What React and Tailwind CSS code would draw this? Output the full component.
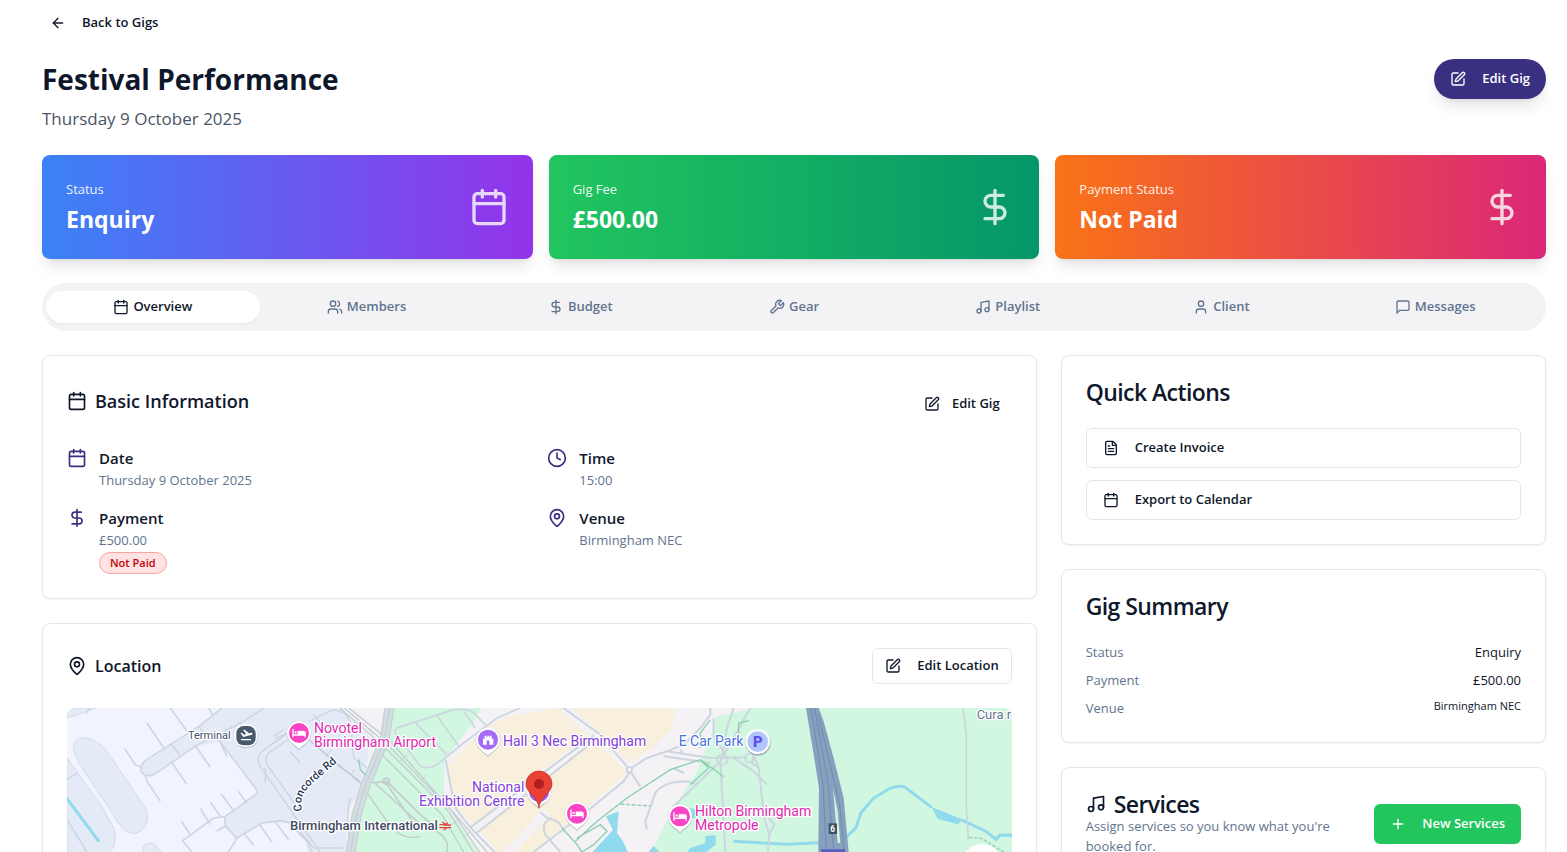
import { useState } from 'react'
import {
  ArrowLeft,
  Calendar,
  Clock,
  DollarSign,
  FileText,
  MapPin,
  Music,
  Plus,
  SquarePen,
  User,
  Users,
} from 'lucide-react'
import clsx from 'clsx'

const WrenchIcon = ({ className }) => (
  <svg className={className} viewBox="0 0 24 24" fill="none" stroke="currentColor" strokeWidth="2" strokeLinecap="round" strokeLinejoin="round" aria-hidden="true">
    <path d="M14.7 6.3a1 1 0 0 0 0 1.4l1.6 1.6a1 1 0 0 0 1.4 0l3.77-3.77a6 6 0 0 1-7.94 7.94l-6.91 6.91a2.12 2.12 0 0 1-3-3l6.91-6.91a6 6 0 0 1 7.94-7.94l-3.76 3.76z" />
  </svg>
)

const MessageIcon = ({ className }) => (
  <svg className={className} viewBox="0 0 24 24" fill="none" stroke="currentColor" strokeWidth="2" strokeLinecap="round" strokeLinejoin="round" aria-hidden="true">
    <path d="M21 15a2 2 0 0 1-2 2H7l-4 4V5a2 2 0 0 1 2-2h14a2 2 0 0 1 2 2z" />
  </svg>
)

const stats = [
  { label: 'Status', value: 'Enquiry', Icon: Calendar, gradient: 'from-[#3b82f6] to-[#9333ea]' },
  { label: 'Gig Fee', value: '£500.00', Icon: DollarSign, gradient: 'from-[#22c55e] to-[#059669]' },
  { label: 'Payment Status', value: 'Not Paid', Icon: DollarSign, gradient: 'from-[#f97316] to-[#db2777]' },
]

const tabs = [
  { name: 'Overview', Icon: Calendar },
  { name: 'Members', Icon: Users },
  { name: 'Budget', Icon: DollarSign },
  { name: 'Gear', Icon: WrenchIcon },
  { name: 'Playlist', Icon: Music },
  { name: 'Client', Icon: User },
  { name: 'Messages', Icon: MessageIcon },
]

const details = [
  { label: 'Date', value: 'Thursday 9 October 2025', Icon: Calendar },
  { label: 'Time', value: '15:00', Icon: Clock },
  { label: 'Payment', value: '£500.00', Icon: DollarSign, badge: 'Not Paid' },
  { label: 'Venue', value: 'Birmingham NEC', Icon: MapPin },
]

const Card = ({ children }) => (
  <section className="rounded-lg border border-gray-200 bg-white p-6 shadow-xs">{children}</section>
)

const StatCard = ({ label, value, Icon, gradient }) => (
  <div className={clsx('flex items-center justify-between rounded-lg bg-linear-to-r/srgb p-6 text-white shadow-lg', gradient)}>
    <div className="flex flex-col gap-1">
      <p className="text-[13px] leading-5 opacity-90">{label}</p>
      <p className="text-[23px] leading-8 font-bold">{value}</p>
    </div>
    <Icon className="size-10 opacity-80" />
  </div>
)

// Teardrop pin used for hotels and venues
const PlacePin = ({ x, y, color, children }) => (
  <g transform={`translate(${x} ${y})`}>
    <path d="M0 49C-6 38-37 28-37-2a37 37 0 0 1 74 0C37 28 6 38 0 49z" fill="#9aa3ad" opacity=".6" />
    <path d="M0 45C-6 34-36 26-36-3a36 36 0 0 1 72 0C36 26 6 34 0 45z" fill="#fff" />
    <circle cy="-3" r="30" fill={color} />
    {children}
  </g>
)

const Bed = () => (
  <g fill="none" stroke="#fff" strokeWidth="4">
    <path d="M-18-15V10M-18 3H18M18 10V-6M-2-9V3" />
    <circle cx="-10" cy="-5" r="3" fill="#fff" strokeWidth="1" />
    <path d="M-2-9H14Q18-9 18-5V3H-2z" fill="#fff" strokeWidth="1" />
  </g>
)

const Castle = () => (
  <path d="M-15 12V-6h5v-9h5v4h3v-4h5v4h3v-4h5v9h5V12H4V3a4 4 0 0 0-8 0v9z" fill="#fff" />
)

const VenueMap = () => (
  <svg className="h-64 w-full rounded-lg" viewBox="0 0 2835 768" preserveAspectRatio="xMinYMin slice" role="img" aria-label="Map of Birmingham NEC">
    <rect width="2835" height="768" fill="#f4f2f4" />

    {/* Airport */}
    <path d="M0 0H820L910 90 890 230 840 310 830 768H0z" fill="#e4ebf7" />
    <path d="M0 0H465L395 55 225 170Q215 190 232 203L250 204 380 115 459 101 569 246Q572 258 560 264L474 326V352L509 391 585 345 665 343 720 400 740 768H0z" fill="#f1f4ff" />
    <path d="M0 0H88L0 30z" fill="#e4ebf7" stroke="#cfd9e6" strokeWidth="3" />
    <path d="M45 90C75 88 105 105 130 145L235 300C250 330 240 370 200 377 175 375 150 345 140 320L45 180C20 140 5 100 45 90z" fill="#e4ebf7" stroke="#cfdae8" strokeWidth="3" />
    <path d="M0 150L104 295 142 365C150 400 140 425 125 432L110 768H0z" fill="#e4ebf7" stroke="#cfdae8" strokeWidth="3" />
    <path d="M228 432C225 410 240 400 262 408L290 440 400 600 260 500z" fill="#e4ebf7" stroke="#cfdae8" strokeWidth="3" />
    <path d="M0 272L94 398" stroke="#8edbee" strokeWidth="9" strokeLinecap="round" />
    <path d="M225 170L395 55 465 0H570L480 65 385 115 262 199Q240 210 225 195z" fill="#e4ebf7" />
    <g fill="none" stroke="#ccd7e2" strokeWidth="5">
      <path d="M465 0L395 55 235 158Q215 175 225 195 240 210 262 199L385 115 480 65 530 40 590 0M395 55L420 88M312 108L338 140" />
      <path d="M240 45L290 120M310 0L360 70M425 0L438 22M173 122L205 170 222 178M312 160L358 227M384 112L430 178M235 205L240 220 280 280M459 101L480 145M440 75L569 246Q572 258 560 264L474 326M474 326L440 330 347 398 375 432M474 326V352L509 391 585 345 640 338 665 343 720 400 745 460" />
      <path d="M343 340L370 380M400 302L430 350M430 282L460 325M463 258L500 308M514 250L538 285M449 370L474 355M509 391L480 440M530 375L560 412M578 350L615 402M625 342L665 395M0 335L60 432M0 215L30 195M57 18L66 0" />
    </g>
    <g fill="none" stroke="#cbd5de" strokeWidth="4">
      <path d="M669 70L585 130Q565 150 580 175L680 320 760 432M669 90L605 135Q590 150 600 170L700 310M619 85L650 65M625 92L665 72M595 180V225M725 40L790 8Q830 0 850 40L860 150 900 180M755 120L810 170 880 220M740 20L790 80M669 130L700 165M850 270Q835 320 850 400M669 335L740 420H830" />
    </g>

    {/* Green areas */}
    <path d="M985 0H1245L1215 50 1134 152 1130 240 1145 310 1185 360 1260 470V768H840L870 400 885 306 955 90 960 0z" fill="#d1f7e0" />
    <path d="M2835 0H2060L1949 26 1929 90 1890 190 1800 336 1745 450V768H2835z" fill="#d1f7e0" />

    {/* NEC halls */}
    <path d="M1262 55L1320 25 1480 0H1828L1815 60 1760 115 1690 165 1665 205 1560 300 1450 390 1370 450 1330 470 1215 345 1160 290 1140 175 1215 100z" fill="#f8efdd" />
    <path d="M1489 0L1585 80 1690 185 1800 110 1930 20M1585 80L1215 370M1300 460L1440 310" fill="none" stroke="#f4f2f4" strokeWidth="26" />

    {/* Water */}
    <path d="M1655 310L1617 325 1638 366 1560 450H1690L1668 400 1650 375zM1744 432L1760 414 1785 440zM1915 384L1946 382V410L1900 445H1850L1870 420 1915 405zM1870 300L1885 305 1890 330H1872z" fill="#90daee" />
    <path d="M1999 400L2160 409 2255 404M2339 386L2367 359 2381 316 2419 271 2469 241Q2500 230 2514 238L2594 298M2680 334L2759 371 2787 394 2799 381 2835 382" fill="none" stroke="#90daee" strokeWidth="9" />
    <path d="M2594 298L2630 311 2684 334 2674 349 2612 333zM2312 320L2322 330 2320 410 2310 390z" fill="#90daee" />

    {/* Railway */}
    <g fill="none" stroke="#c3cccf" strokeWidth="4">
      <path d="M819 0L950 115 1145 310 1230 450M832 0L960 108 1155 310 1250 450M845 0L970 100 1165 320 1275 450M930 125L1125 320 1200 450M719 90L880 225 960 340Q1000 400 1060 385" />
      <path d="M900 60L920 78M1000 160L1020 140M1060 220L1078 200M1110 275L1130 255M1155 350L1180 330M1190 390L1210 370M780 140L795 125M850 200L865 185" strokeWidth="3" />
      <path d="M885 300V250Q890 225 920 222L1050 340 1100 365Q1150 390 1140 432M960 220L1060 320 1090 345M955 222L1040 345M960 220L920 224" strokeWidth="5" />
      <circle cx="958" cy="220" r="9" strokeWidth="5" />
    </g>

    {/* Roads */}
    <path d="M968 -5L954 90 894 236 869 320 848 450" fill="none" stroke="#c3ced4" strokeWidth="30" />
    <path d="M968 -5L954 90 894 236 869 320 848 450" fill="none" stroke="#d3dce0" strokeWidth="24" />
    <path d="M968 -5L954 90 894 236 869 320 848 450" fill="none" stroke="#c3ced4" strokeWidth="3" />
    <g fill="none" stroke="#ccd5e0" strokeWidth="7">
      <path d="M985 75Q980 65 995 58L1160 5Q1215 0 1225 20L1255 50M985 75L1060 175Q1085 185 1110 170L1190 105 1290 30 1359 0M1045 45L1140 140M1108 20L1175 115M1190 10L1225 60" strokeWidth="5" />
      <path d="M1136 155L1150 230 1165 300 1210 358 1300 450M1210 358L1580 82M1225 378L1595 88M1489 0L1600 80 1685 182" strokeWidth="6" />
      <path d="M1690 182L1740 150 1800 130 1930 150 2040 148M1800 130L1850 110 1900 60 1930 20V0M1790 145L1930 165M1840 125L1850 140M1690 190L1670 220 1560 310 1400 432M1690 190L1720 235M1420 312L1440 330Q1480 335 1490 370M1435 380Q1420 340 1455 332M1435 380L1480 432" strokeWidth="6" />
      <path d="M1739 365L1735 340 1765 255Q1790 220 1860 220L1890 230M1815 300L1960 160 2050 0M1960 160L1975 432M2000 0L1980 60 1965 150M2000 150L2060 190 2100 230M1940 30V90L1970 130M1820 180L1850 195" strokeWidth="6" />
      <circle cx="1687" cy="185" r="8" strokeWidth="5" fill="#f4f2f4" />
      <circle cx="1966" cy="155" r="16" strokeWidth="5" />
      <circle cx="2047" cy="150" r="13" strokeWidth="5" />
      <path d="M2062 130L2055 165 2075 180 2092 330 2107 380 2103 432M2062 145L2075 180M2107 380L2122 350 2105 330" strokeWidth="6" />
      <path d="M2688 0L2698 80V300L2704 395M2704 420V470" strokeWidth="5" />
    </g>
    <g fill="none" stroke="#8bcfb3" strokeWidth="4">
      <path d="M1485 360L1530 410 1545 432M1525 400L1590 340 1680 270 1810 185 1900 155 1935 180 1970 206M1530 390L1600 350 1620 370 1580 410 1545 432M1900 155L1925 180 1870 230M2015 90V45L2045 38M1930 35L1900 75V120" />
      <path d="M1660 288L1750 294" strokeDasharray="12 5" />
      <path d="M2707 388L2745 392 2810 432" strokeDasharray="10 5" />
      <path d="M875 155L880 185 895 200" />
    </g>

    {/* Motorway */}
    <path d="M2217 0H2255L2270 40 2300 150 2330 270 2345 432V768H2250L2256 240 2240 140z" fill="#86a0be" />
    <path d="M2298 240L2312 310 2320 405 2312 405z" fill="#d1f7e0" />
    <path d="M2232 0L2268 230 2278 432M2243 0L2284 230 2300 432M2254 20L2318 290 2332 432" fill="none" stroke="#6f8bad" strokeWidth="3" />
    <path d="M2262 424H2334V460H2262z" fill="#5a5fbf" />
    <rect x="2285" y="346" width="25" height="32" fill="#455060" />

    {/* Places */}
    <rect x="504" y="52" width="68" height="68" rx="28" fill="#9aa3ad" opacity=".6" />
    <rect x="503" y="49" width="68" height="68" rx="28" fill="#fff" />
    <rect x="508" y="54" width="58" height="58" rx="22" fill="#495a6e" />
    <path d="M522 95H552" stroke="#fff" strokeWidth="4" />
    <path d="M520 75L525 74 531 80 538 78 528 66 533 65 546 76 554 74Q559 76 555 80L529 87z" fill="#fff" />
    <PlacePin x="696" y="78" color="#f945c5"><Bed /></PlacePin>
    <PlacePin x="1263" y="98" color="#a66bf5"><Castle /></PlacePin>
    <PlacePin x="1530" y="320" color="#f945c5"><Bed /></PlacePin>
    <PlacePin x="1839" y="328" color="#f945c5"><Bed /></PlacePin>
    <circle cx="2073" cy="105" r="38" fill="#8796ad" opacity=".7" />
    <circle cx="2072" cy="101" r="37" fill="#fff" />
    <circle cx="2072" cy="101" r="31" fill="#b3c5fd" />
    <PlacePin x="1416" y="255" color="#9b5cf0" />
    <path d="M1416 300C1412 265 1377 255 1377 228a39 39 0 0 1 78 0C1455 255 1420 265 1416 300z" fill="#e94235" stroke="#c5221f" strokeWidth="2" />
    <circle cx="1416" cy="228" r="15" fill="#b11f1a" />

    {/* Labels */}
    <g fontFamily="Roboto, sans-serif" fontSize="42" stroke="#fff" strokeWidth="8" strokeLinejoin="round" style={{ paintOrder: 'stroke' }}>
      <text x="363" y="93" fontSize="33" fill="#45526b">Terminal</text>
      <g fill="#e028b0">
        <text x="741" y="76">Novotel</text>
        <text x="741" y="117">Birmingham Airport</text>
        <text x="1884" y="325">Hilton Birmingham</text>
        <text x="1884" y="367">Metropole</text>
      </g>
      <g fill="#8440d8">
        <text x="1308" y="115">Hall 3 Nec Birmingham</text>
        <text x="1372" y="252" textAnchor="end">National</text>
        <text x="1372" y="294" textAnchor="end">Exhibition Centre</text>
      </g>
      <text x="1835" y="115" fill="#4472e3">E Car Park</text>
      <text x="2729" y="33" fontSize="39" fill="#66758f">Cura r</text>
      <text x="669" y="367" fontSize="39" fontWeight="500" fill="#3f4c63">Birmingham International</text>
      <path id="concorde-rd" d="M706 308C694 268 716 244 740 222L830 146" fill="none" stroke="none" />
      <text fontSize="33" fontWeight="500" fill="#26345a">
        <textPath href="#concorde-rd">Concorde Rd</textPath>
      </text>
    </g>
    <text x="2058" y="117" fontFamily="Roboto, sans-serif" fontSize="44" fontWeight="900" fill="#5b50f0">P</text>
    <text x="2290" y="371" fontFamily="Roboto, sans-serif" fontSize="25" fontWeight="700" fill="#fff">6</text>
    <path d="M1117 350H1136L1126 342M1152 359H1117M1152 351H1134L1142 344M1117 359H1140L1130 366" fill="none" stroke="#e8453c" strokeWidth="4" />
    <circle cx="2744" cy="470" r="62" fill="#fff" />
  </svg>
)

const App = () => {
  const [activeTab, setActiveTab] = useState('Overview')

  return (
    <div className="h-screen overflow-y-auto bg-white pr-[21px] pl-[42px] font-['Open_Sans',sans-serif] text-slate-900 [scrollbar-width:none]">
      <button type="button" className="mt-[5px] flex h-9 items-center gap-4 px-2 text-[13px] font-semibold">
        <ArrowLeft className="size-4" />
        Back to Gigs
      </button>

      <header className="mt-[18px] flex items-start justify-between">
        <div>
          <h1 className="text-[28px] leading-10 font-bold">Festival Performance</h1>
          <p className="mt-1.5 text-[17px] leading-7 text-gray-600">Thursday 9 October 2025</p>
        </div>
        <button type="button" className="flex h-10 items-center gap-4 rounded-full bg-[#3a3082] px-4 text-[13px] font-semibold text-white shadow-lg">
          <SquarePen className="size-4" />
          Edit Gig
        </button>
      </header>

      <div className="mt-[22px] grid grid-cols-3 gap-4">
        {stats.map((stat) => (
          <StatCard key={stat.label} {...stat} />
        ))}
      </div>

      <div role="tablist" className="mt-6 grid h-12 grid-cols-7 items-center rounded-full bg-[#f3f3f6] px-1">
        {tabs.map(({ name, Icon }) => (
          <button
            key={name}
            type="button"
            role="tab"
            aria-selected={activeTab === name}
            onClick={() => setActiveTab(name)}
            className={clsx(
              'flex h-8 items-center justify-center gap-1 rounded-full text-[13px] font-semibold',
              activeTab === name ? 'bg-white text-slate-900 shadow-xs' : 'text-slate-500'
            )}
          >
            <Icon className="size-4" />
            {name}
          </button>
        ))}
      </div>

      <main className="mt-6 grid grid-cols-3 items-start gap-6">
        <div className="col-span-2 flex flex-col gap-6">
          <Card>
            <div className="flex justify-between">
              <h2 className="flex items-center gap-2 text-[18px] leading-7 font-semibold">
                <Calendar className="size-5" />
                Basic Information
              </h2>
              <button type="button" className="mt-1.5 flex h-9 items-center gap-3 px-3 text-[13px] font-semibold">
                <SquarePen className="size-4" />
                Edit Gig
              </button>
            </div>
            <div className="mt-6 grid grid-cols-2 gap-4">
              {details.map(({ label, value, Icon, badge }) => (
                <div key={label} className="flex gap-3">
                  <Icon className="mt-0.5 size-5 text-[#3a3082]" />
                  <div>
                    <p className="text-[15px] leading-6 font-semibold">{label}</p>
                    <p className="text-[13px] leading-5 text-slate-500">{value}</p>
                    {badge && (
                      <span className="mt-0.5 flex rounded-full border border-red-300 bg-red-100 px-2.5 text-[11px] leading-5 font-semibold text-red-700">
                        {badge}
                      </span>
                    )}
                  </div>
                </div>
              ))}
            </div>
          </Card>

          <Card>
            <div className="flex items-center justify-between">
              <h2 className="flex items-center gap-2 text-[16px] leading-7 font-semibold">
                <MapPin className="size-5" />
                Location
              </h2>
              <button type="button" className="flex h-9 items-center gap-4 rounded-md border border-gray-200 px-3 text-[13px] font-semibold">
                <SquarePen className="size-4" />
                Edit Location
              </button>
            </div>
            <div className="mt-6">
              <VenueMap />
            </div>
          </Card>
        </div>

        <aside className="flex flex-col gap-6">
          <Card>
            <h2 className="text-[23px] leading-6 font-semibold tracking-tight">Quick Actions</h2>
            <div className="mt-6 flex flex-col gap-3">
              <button type="button" className="flex h-10 items-center gap-4 rounded-md border border-gray-200 px-4 text-[13px] font-semibold">
                <FileText className="size-4" />
                Create Invoice
              </button>
              <button type="button" className="flex h-10 items-center gap-4 rounded-md border border-gray-200 px-4 text-[13px] font-semibold">
                <Calendar className="size-4" />
                Export to Calendar
              </button>
            </div>
          </Card>

          <Card>
            <h2 className="text-[23px] leading-6 font-semibold tracking-tight">Gig Summary</h2>
            <dl className="mt-6 flex flex-col gap-2 text-[13px] leading-5">
              <div className="flex justify-between">
                <dt className="text-slate-500">Status</dt>
                <dd>Enquiry</dd>
              </div>
              <div className="flex justify-between">
                <dt className="text-slate-500">Payment</dt>
                <dd>£500.00</dd>
              </div>
              <div className="flex justify-between">
                <dt className="text-slate-500">Venue</dt>
                <dd className="text-[11px] leading-4">Birmingham NEC</dd>
              </div>
            </dl>
          </Card>

          <Card>
            <div className="flex items-center justify-between gap-4">
              <div>
                <h2 className="flex items-center gap-2 text-[23px] leading-6 font-semibold tracking-tight">
                  <Music className="size-5" />
                  Services
                </h2>
                <p className="text-[13px] leading-5 text-slate-500">Assign services so you know what you're booked for.</p>
              </div>
              <button type="button" className="flex h-10 shrink-0 items-center gap-4 rounded-md bg-[#22c55e] px-4 text-[13px] font-semibold text-white">
                <Plus className="size-4" />
                New Services
              </button>
            </div>
          </Card>
        </aside>
      </main>
    </div>
  )
}

export default App
